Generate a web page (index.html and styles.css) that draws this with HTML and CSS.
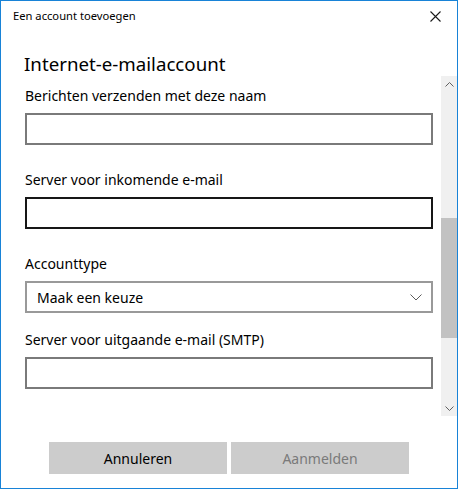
FILE: index.html
```html
<!DOCTYPE html>
<html lang="nl">
<head>
<meta charset="utf-8">
<title>Een account toevoegen</title>
<link rel="stylesheet" href="styles.css">
</head>
<body>
<div class="window">
  <div class="titlebar">
    <span class="title">Een account toevoegen</span>
    <div class="close">
      <svg width="11" height="11" viewBox="0 0 11 11"><path d="M0.5 0.5 L10.5 10.5 M10.5 0.5 L0.5 10.5" stroke="#1a1a1a" stroke-width="1.1" fill="none"/></svg>
    </div>
  </div>
  <h1 class="heading">Internet-e-mailaccount</h1>
  <div class="scroll">
    <div class="content">
      <div class="field">
        <label class="label">Berichten verzenden met deze naam</label>
        <div class="input"></div>
      </div>
      <div class="field">
        <label class="label">Server voor inkomende e-mail</label>
        <div class="input focused"></div>
      </div>
      <div class="field field-select">
        <label class="label">Accounttype</label>
        <div class="select">
          <span>Maak een keuze</span>
          <svg width="12" height="7" viewBox="0 0 12 7"><path d="M0.5 0.5 L6 6 L11.5 0.5" stroke="#5c5c5c" stroke-width="1" fill="none"/></svg>
        </div>
      </div>
      <div class="field">
        <label class="label">Server voor uitgaande e-mail (SMTP)</label>
        <div class="input"></div>
      </div>
    </div>
    <div class="scrollbar">
      <div class="arrow">
        <svg width="9" height="5" viewBox="0 0 9 5"><path d="M0.5 4.5 L4.5 0.5 L8.5 4.5" stroke="#606060" stroke-width="1" fill="none"/></svg>
      </div>
      <div class="track"><div class="thumb"></div></div>
      <div class="arrow">
        <svg width="9" height="5" viewBox="0 0 9 5"><path d="M0.5 0.5 L4.5 4.5 L8.5 0.5" stroke="#606060" stroke-width="1" fill="none"/></svg>
      </div>
    </div>
  </div>
  <div class="footer">
    <button class="btn">Annuleren</button>
    <button class="btn disabled">Aanmelden</button>
  </div>
</div>
</body>
</html>
```

FILE: styles.css
```css
html, body {
  margin: 0;
  padding: 0;
  background: #ffffff;
}
body {
  font-family: "Noto Sans", "Open Sans", sans-serif;
  color: #000;
}
.window {
  width: 458px;
  height: 489px;
  box-sizing: border-box;
  border: 1px solid #1883d7;
  display: flex;
  flex-direction: column;
  background: #fff;
}
.titlebar {
  height: 30px;
  display: flex;
  align-items: center;
  justify-content: space-between;
  padding-left: 12px;
  flex: none;
}
.title {
  font-size: 11.2px;
  line-height: 30px;
  color: #000;
}
.close {
  width: 44px;
  height: 30px;
  display: flex;
  align-items: center;
  justify-content: center;
}
.close svg { display: block; }
.heading {
  margin: 20px 0 0 0;
  padding-left: 23px;
  height: 25px;
  line-height: 25px;
  font-size: 18.7px;
  font-weight: normal;
  flex: none;
}
.scroll {
  height: 340px;
  display: flex;
  flex: none;
}
.content {
  flex: 1;
  overflow: hidden;
  padding: 9px 8px 0 24px;
  display: flex;
  flex-direction: column;
  gap: 24px;
}
.field {
  display: flex;
  flex-direction: column;
  gap: 8px;
}
.field-select {
  margin-bottom: -8px;
}
.label {
  font-size: 14px;
  line-height: 21px;
  height: 20px;
  color: #000;
}
.input {
  height: 32px;
  box-sizing: border-box;
  border: 2px solid #7a7a7a;
  background: #fff;
}
.input.focused {
  border-color: #171717;
}
.select {
  height: 32px;
  box-sizing: border-box;
  border: 2px solid #999999;
  display: flex;
  align-items: center;
  justify-content: space-between;
  padding: 0 9px 0 10px;
  font-size: 14px;
}
.select svg { display: block; margin-top: 1px; }
.scrollbar {
  width: 16px;
  background: #f0f0f0;
  display: flex;
  flex-direction: column;
}
.arrow {
  height: 16px;
  display: flex;
  align-items: center;
  justify-content: center;
  flex: none;
}
.arrow svg { display: block; }
.track {
  flex: 1;
}
.thumb {
  margin-top: 126px;
  height: 120px;
  background: #c2c2c2;
}
.footer {
  display: flex;
  justify-content: center;
  gap: 4px;
  padding-top: 26px;
}
.btn {
  width: 178px;
  height: 32px;
  border: none;
  margin: 0;
  background: #cccccc;
  font-family: "Noto Sans", "Open Sans", sans-serif;
  font-size: 14px;
  color: #000;
  padding: 0;
}
.btn.disabled {
  color: #7a7a7a;
}
```
